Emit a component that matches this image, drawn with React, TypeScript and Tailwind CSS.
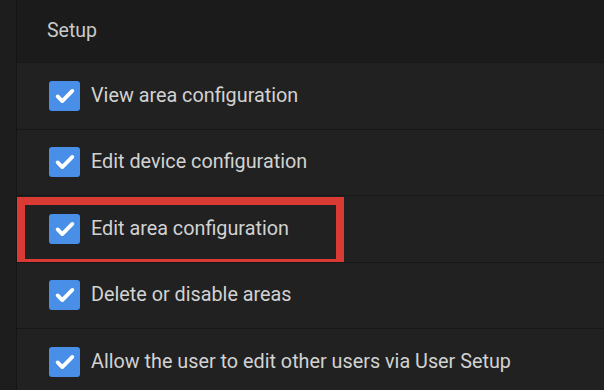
import React from "react";

const items = [
  "View area configuration",
  "Edit device configuration",
  "Edit area configuration",
  "Delete or disable areas",
  "Allow the user to edit other users via User Setup",
];

function Check() {
  return (
    <div className="flex h-[30px] w-[31px] shrink-0 items-center justify-center rounded-[3px] bg-[#4a8fe7]">
      <svg width="22" height="22" viewBox="0 0 24 24" fill="none">
        <path d="M4 12.5l5 5L20 6.5" stroke="#fff" strokeWidth="4.2" strokeLinecap="round" strokeLinejoin="round" />
      </svg>
    </div>
  );
}

export default function App() {
  return (
    <div
      className="relative flex h-[390px] w-[604px] overflow-hidden bg-[#1c1c1c]"
      style={{ fontFamily: "Roboto, 'Liberation Sans', sans-serif" }}
    >
      <div className="w-[17px] shrink-0 border-r border-[#151515] bg-[#1d1d1d]" />
      <div className="flex min-w-0 flex-1 flex-col">
        <div className="flex h-[62px] shrink-0 items-center bg-[#1b1b1b] pl-[30px] text-[19.5px] text-[#c9c9c9]">
          Setup
        </div>
        {items.map((t, i) => (
          <div
            key={i}
            className="relative flex h-[66.5px] shrink-0 items-center gap-[11px] border-t border-[#171717] bg-[#212121] pl-[32px] text-[19.8px] text-[#d2d2d2]"
          >
            <Check />
            <span>{t}</span>
            {i === 2 && (
              <div className="pointer-events-none absolute left-0 top-[1px] box-border h-[70px] w-[327px] border-8 border-solid border-[#d93a34]" />
            )}
          </div>
        ))}
      </div>
    </div>
  );
}
